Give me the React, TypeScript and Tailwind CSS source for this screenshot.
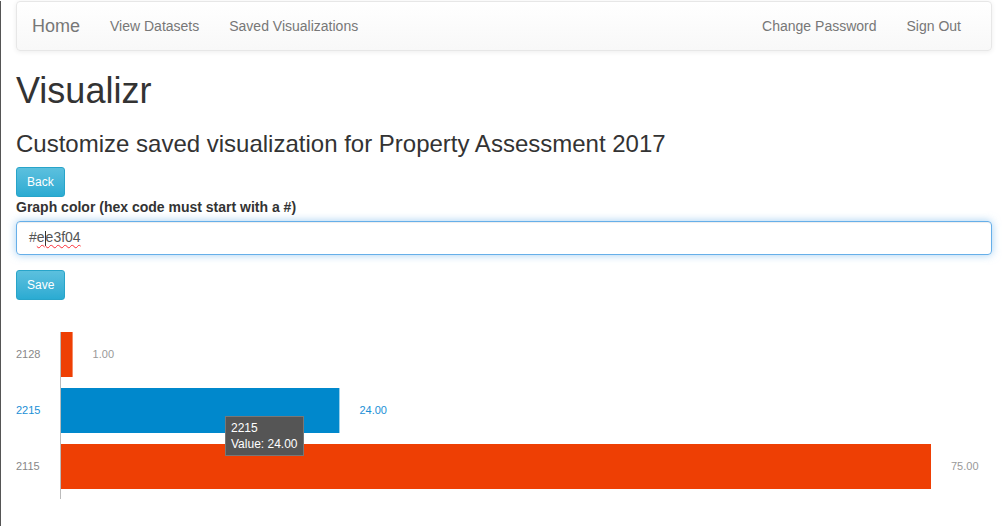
import React from 'react'

const BARS = [
  { label: '2128', value: 1, color: '#ee3f04', active: false },
  { label: '2215', value: 24, color: '#0088cc', active: true },
  { label: '2115', value: 75, color: '#ee3f04', active: false },
]

const SCALE = 11.6

function NavBar(): React.ReactElement {
  return (
    <nav className="mt-px flex h-[50px] items-center justify-between rounded-[4px] border border-[#e7e7e7] bg-gradient-to-b from-white to-[#f8f8f8] shadow-[0_1px_5px_rgba(0,0,0,0.075)]">
      <div className="flex items-center">
        <a className="px-[15px] text-[18px] text-[#777]">Home</a>
        <a className="px-[15px] text-[14px] text-[#777]">View Datasets</a>
        <a className="px-[15px] text-[14px] text-[#777]">Saved Visualizations</a>
      </div>
      <div className="flex items-center pr-[15px]">
        <a className="px-[15px] text-[14px] text-[#777]">Change Password</a>
        <a className="px-[15px] text-[14px] text-[#777]">Sign Out</a>
      </div>
    </nav>
  )
}

function Chart(): React.ReactElement {
  return (
    <div className="relative mt-[10px] h-[216px]">
      <svg width="990" height="216" className="block">
        {BARS.map((b, i) => {
          const y = 22 + i * 56
          const w = b.value * SCALE
          const textColor = b.active ? '#1a8fd6' : '#888'
          return (
            <g key={b.label}>
              <text x="0" y={y + 26} fontSize="11" fill={textColor} fontFamily="Liberation Sans, Arial, sans-serif">
                {b.label}
              </text>
              <rect x="45" y={y} width={w} height="45" fill={b.color} />
              <text x={45 + w + 20} y={y + 26} fontSize="11" fill={b.active ? '#1a8fd6' : '#999'} fontFamily="Liberation Sans, Arial, sans-serif">
                {b.value.toFixed(2)}
              </text>
            </g>
          )
        })}
        <line x1="44.5" y1="22" x2="44.5" y2="189" stroke="#bbb" strokeWidth="1" />
      </svg>
      <div className="absolute left-[209px] top-[106px] whitespace-nowrap border border-[#777] bg-[#555] px-[5px] py-[3px] text-[12px] leading-[16px] text-white">
        <div>2215</div>
        <div>Value: 24.00</div>
      </div>
    </div>
  )
}

export default function App(): React.ReactElement {
  return (
    <div
      className="min-h-[526px] border-l border-[#555] bg-white pl-[15px] pr-[14px] text-[14px] text-[#333]"
      style={{ fontFamily: '"Liberation Sans", Arial, sans-serif' }}
    >
      <NavBar />
      <h1 className="mt-[20px] text-[36px] leading-[1.1] text-[#333]">Visualizr</h1>
      <h3 className="mt-[20px] text-[24px] leading-[1.1] text-[#333]">
        Customize saved visualization for Property Assessment 2017
      </h3>
      <button className="mt-[10px] block h-[30px] rounded-[3px] border border-[#28a4c9] bg-gradient-to-b from-[#5bc0de] to-[#2aabd2] px-[10px] text-[12px] text-white">
        Back
      </button>
      <label className="block text-[14px] font-bold leading-[20px] text-[#333]">
        Graph color (hex code must start with a #)
      </label>
      <div className="mt-[4px] flex h-[34px] items-center rounded-[4px] border border-[#66afe9] px-[12px] text-[14px] text-[#555] shadow-[inset_0_1px_1px_rgba(0,0,0,0.075),0_0_8px_rgba(102,175,233,0.6)]">
        <span>#</span>
        <span className="underline decoration-wavy decoration-red-500 decoration-1 underline-offset-2">
          e<span className="inline-block h-[15px] w-px bg-[#333] align-middle" />e3f04
        </span>
      </div>
      <button className="mt-[15px] block h-[30px] rounded-[3px] border border-[#28a4c9] bg-gradient-to-b from-[#5bc0de] to-[#2aabd2] px-[10px] text-[12px] text-white">
        Save
      </button>
      <Chart />
    </div>
  )
}
